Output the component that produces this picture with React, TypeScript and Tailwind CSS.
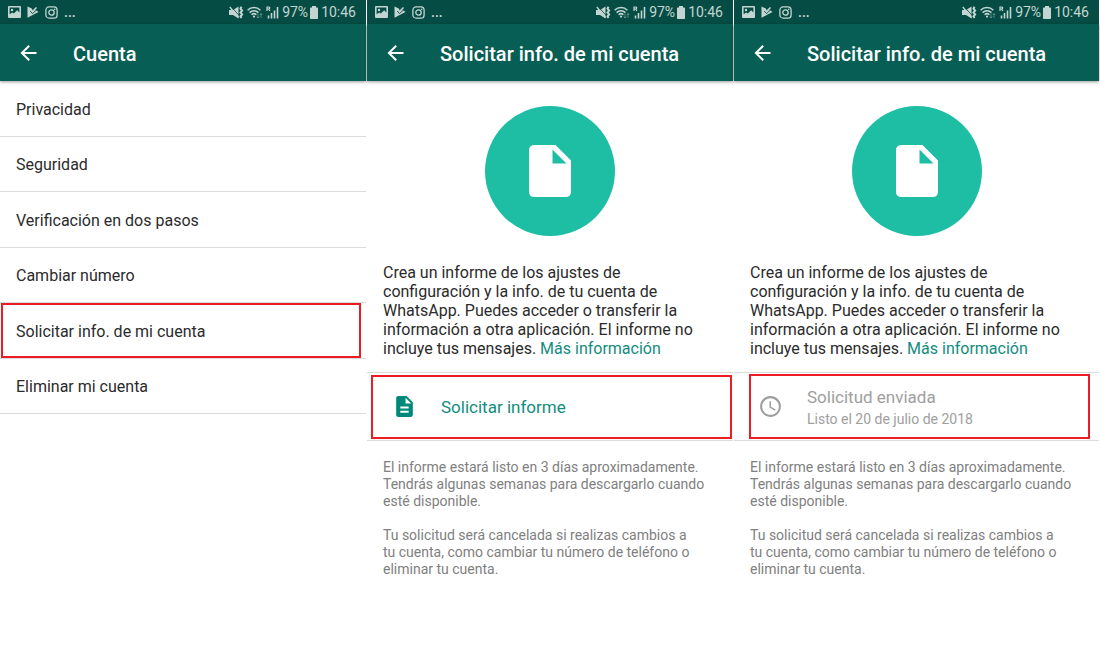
import React from 'react';

const StatusBar = () => (
  <div className="flex h-6 items-center justify-between bg-[#054d44] pl-2 pr-2.5 text-sm leading-4 text-[#c3d5d2]">
    <div className="flex items-center gap-1.5">
      <svg width="13" height="12" viewBox="0 0 13 12" fill="currentColor" aria-hidden="true">
        <path fillRule="evenodd" d="M1 0h11a1 1 0 0 1 1 1v10a1 1 0 0 1-1 1H1a1 1 0 0 1-1-1V1a1 1 0 0 1 1-1zm.6 1.6v6.6l2.6-1.8 1.6 1.2 3.4-3.4 2.2 2.2V1.6z" />
        <circle cx="4" cy="4" r="1.2" />
      </svg>
      <svg width="12" height="12" viewBox="0 0 12 12" fill="currentColor" aria-hidden="true">
        <path d="M.5.500 4.800 2.500 6 5 8.500 3.800 11.500 6 .5 11.800z" />
        <path d="m3.200 5 2.300 2.600L11 2.500" fill="none" stroke="#054d44" strokeWidth=".9" />
        <path d="M5.800 5.200 9.500 1.500" fill="none" stroke="currentColor" strokeWidth="1.600" />
      </svg>
      <svg width="13" height="13" viewBox="0 0 13 13" fill="none" stroke="currentColor" strokeWidth="1.3" aria-hidden="true">
        <rect x=".9" y=".9" width="11.2" height="11.2" rx="3.200" />
        <circle cx="6.5" cy="6.5" r="2.7" />
        <circle cx="9.7" cy="3.3" r=".8" fill="currentColor" stroke="none" />
      </svg>
      <span className="font-medium">...</span>
    </div>
    <div className="flex items-center gap-[3px]">
      <svg width="15" height="13" viewBox="0 0 15 13" fill="currentColor" aria-hidden="true">
        <path d="M0 4h4L9.500.5v12L4 9H0z" />
        <path d="M2.200.8 10.500 9.800" stroke="#054d44" strokeWidth=".8" />
        <path d="m.8 1 8.700 10.500" stroke="currentColor" strokeWidth="1.400" />
        <path d="m12.500.8-1 1.900 1.600 1.900-1.600 1.900 1.600 1.900-1.600 1.900 1 1.700" fill="none" stroke="currentColor" strokeWidth="2" />
      </svg>
      <svg width="16" height="13" viewBox="0 0 16 13" fill="none" stroke="currentColor" strokeWidth="1.5" aria-hidden="true">
        <path d="M.6 4.2c3.6-3.6 9.2-3.6 12.8 0M2.6 6.6c2.5-2.5 6.3-2.5 8.8 0M4.6 8.8c1.4-1.4 3.4-1.4 4.8 0" />
        <circle cx="7" cy="10.6" r="1.1" fill="currentColor" stroke="none" />
        <path d="M11 7.500V12M9.700 10.500 11 12l1.300-1.500M14 12V7.500M12.800 9 14 7.500 15.200 9" strokeWidth=".8" opacity=".5" />
      </svg>
      <svg width="13" height="13" viewBox="0 0 13 13" fill="none" stroke="currentColor" strokeWidth="1.6" aria-hidden="true">
        <path d="M1 5V1h1.500c1.600 0 1.600 2 0 2H1m1.500 0L4 5" strokeWidth="1.200" />
        <path d="M2.500 9.500V12.500M5.500 7v5.500M8.500 4.500v8M11.500 1v11.500" />
      </svg>
      <span className="-mr-px">97%</span>
      <svg width="8" height="13" viewBox="0 0 8 13" fill="currentColor" aria-hidden="true">
        <path d="M2 0h4v1.500h1.300q.7 0 .7.700v10.100q0 .7-.7.700H.7q-.7 0-.7-.7V2.200q0-.7.7-.7H2z" />
      </svg>
      <span>10:46</span>
    </div>
  </div>
);

const Screen = ({ title, children }: { title: string; children: React.ReactNode }) => (
  <section className="min-w-0 border-white last:border-r">
    <StatusBar />
    <header className="flex h-[57px] items-center bg-[#075e54] pl-4 pt-px text-white shadow-[0_1px_3px_rgba(0,0,0,0.4)]">
      <button type="button" aria-label="Atrás" className="mr-8 shrink-0">
        <svg width="25" height="24" viewBox="0 0 24 24" fill="currentColor">
          <path d="M20 11H7.83l5.59-5.59L12 4l-8 8 8 8 1.41-1.41L7.83 13H20v-2z" />
        </svg>
      </button>
      <h1 className="whitespace-nowrap pt-0.5 text-xl font-medium">{title}</h1>
    </header>
    {children}
  </section>
);

// red frame drawn over a row
const Highlight = ({ className }: { className: string }) => (
  <span className={`pointer-events-none absolute border-2 border-[#ed1c24] ${className}`} />
);

const options = [
  'Privacidad',
  'Seguridad',
  'Verificación en dos pasos',
  'Cambiar número',
  'Solicitar info. de mi cuenta',
  'Eliminar mi cuenta',
];

const AccountList = () => (
  <ul className="flex h-[333px] flex-col">
    {options.map((option, index) => (
      <li key={option} className="relative flex flex-1 border-b border-[#dcdcdc]">
        <button type="button" className="w-full px-4 pt-[3px] text-left text-base text-[#2b2b2b]">
          {option}
        </button>
        {index === 4 && <Highlight className="bottom-0 left-px right-[5px] top-0" />}
      </li>
    ))}
  </ul>
);

const ReportInfo = ({ children }: { children: React.ReactNode }) => (
  <main>
    <div className="mx-auto mt-[25px] flex size-[130px] items-center justify-center rounded-full bg-[#1ebea5]">
      <svg width="42" height="52" viewBox="0 0 42 52" fill="#fff" aria-hidden="true">
        <path fillRule="evenodd" d="M5.500 0H26.500L42 15.500V46.500Q42 52 36.500 52H5.500Q0 52 0 46.500V5.500Q0 0 5.500 0zM23.500 4.500V18.500H37.500z" />
      </svg>
    </div>
    <p className="mt-[27px] whitespace-nowrap px-4 text-base leading-[19px] text-[#2b2b2b]">
      Crea un informe de los ajustes de<br />
      configuración y la info. de tu cuenta de<br />
      WhatsApp. Puedes acceder o transferir la<br />
      información a otra aplicación. El informe no<br />
      incluye tus mensajes. <a href="#info" className="text-[#128c7e]">Más información</a>
    </p>
    <div className="relative mt-3.5 h-[69px] border-y border-[#dcdcdc]">{children}</div>
    <div className="flex flex-col gap-[17px] whitespace-nowrap px-4 pt-[18px] text-sm leading-[17px] text-[#808080]">
      <p>
        El informe estará listo en 3 días aproximadamente.<br />
        Tendrás algunas semanas para descargarlo cuando<br />
        esté disponible.
      </p>
      <p>
        Tu solicitud será cancelada si realizas cambios a<br />
        tu cuenta, como cambiar tu número de teléfono o<br />
        eliminar tu cuenta.
      </p>
    </div>
  </main>
);

export default function App() {
  return (
    <div className="grid min-h-screen grid-cols-3 gap-px bg-white font-[Roboto,sans-serif]">
      <Screen title="Cuenta">
        <AccountList />
      </Screen>
      <Screen title="Solicitar info. de mi cuenta">
        <ReportInfo>
          <button type="button" className="flex h-full w-full items-center pl-[25px] text-left text-[17px] text-[#128c7e]">
            <svg width="25" height="25" viewBox="0 0 24 24" fill="#00897b" className="mr-6" aria-hidden="true">
              <path d="M14 2H6c-1.100 0-2 .9-2 2v16c0 1.100.9 2 2 2h12c1.100 0 2-.9 2-2V8l-6-6zm2 16H8v-2h8v2zm0-4H8v-2h8v2zm-3-5V3.500L18.500 9H13z" />
            </svg>
            <span className="pt-0.5">Solicitar informe</span>
          </button>
          <Highlight className="bottom-px left-1 right-px top-0.5" />
        </ReportInfo>
      </Screen>
      <Screen title="Solicitar info. de mi cuenta">
        <ReportInfo>
          <div className="flex h-full items-center pl-6 text-[#9e9e9e]">
            <svg width="25" height="25" viewBox="0 0 24 24" fill="currentColor" className="mr-6" aria-hidden="true">
              <path d="M11.990 2C6.470 2 2 6.480 2 12s4.470 10 9.990 10C17.520 22 22 17.520 22 12S17.520 2 11.990 2zM12 20c-4.420 0-8-3.580-8-8s3.580-8 8-8 8 3.580 8 8-3.580 8-8 8zm.5-13H11v6l5.250 3.150.75-1.230-4.500-2.670z" />
            </svg>
            <div className="pt-0.5">
              <p className="text-[17px] leading-[22px]">Solicitud enviada</p>
              <p className="text-sm leading-[22px]">Listo el 20 de julio de 2018</p>
            </div>
          </div>
          <Highlight className="bottom-px left-[15px] right-[9px] top-px" />
        </ReportInfo>
      </Screen>
    </div>
  );
}
